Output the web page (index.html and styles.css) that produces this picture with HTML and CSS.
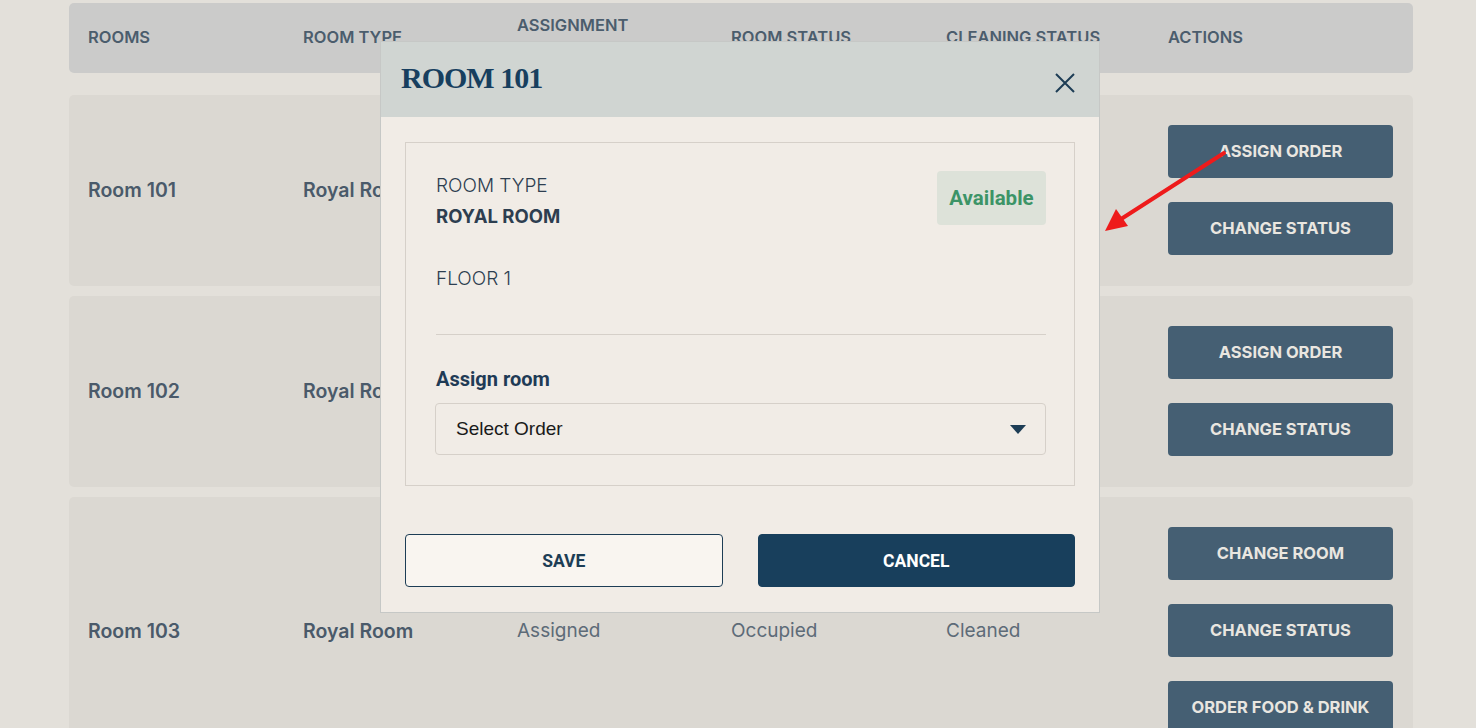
FILE: index.html
```html
<!DOCTYPE html>
<html lang="en">
<head>
    <meta charset="UTF-8">
    <meta name="viewport" content="width=device-width, initial-scale=1.0">
    <title>Rooms</title>
    <link rel="stylesheet" href="styles.css">
</head>
<body>
    <div class="page">
        <div class="rooms-table">
            <div class="thead">
                <div class="th">Rooms</div>
                <div class="th">Room type</div>
                <div class="th">Assignment<br>status</div>
                <div class="th">Room status</div>
                <div class="th">Cleaning status</div>
                <div class="th">Actions</div>
            </div>

            <div class="row">
                <div class="cell strong">Room 101</div>
                <div class="cell strong">Royal Room</div>
                <div class="cell">Unassigned</div>
                <div class="cell">Available</div>
                <div class="cell">Cleaned</div>
                <div class="actions">
                    <button class="action">Assign order</button>
                    <button class="action">Change status</button>
                </div>
            </div>

            <div class="row">
                <div class="cell strong">Room 102</div>
                <div class="cell strong">Royal Room</div>
                <div class="cell">Unassigned</div>
                <div class="cell">Available</div>
                <div class="cell">Cleaned</div>
                <div class="actions">
                    <button class="action">Assign order</button>
                    <button class="action">Change status</button>
                </div>
            </div>

            <div class="row">
                <div class="cell strong">Room 103</div>
                <div class="cell strong">Royal Room</div>
                <div class="cell">Assigned</div>
                <div class="cell">Occupied</div>
                <div class="cell">Cleaned</div>
                <div class="actions">
                    <button class="action">Change room</button>
                    <button class="action">Change status</button>
                    <button class="action">Order food &amp; drink</button>
                </div>
            </div>
        </div>
    </div>

    <div class="modal">
        <div class="modal-header">
            <h2 class="modal-title">ROOM 101</h2>
            <button class="modal-close" aria-label="Close">
                <svg width="20" height="20" viewBox="0 0 20 20">
                    <path d="M1 1 L19 19 M19 1 L1 19" stroke="#1d3d55" stroke-width="2" fill="none"/>
                </svg>
            </button>
        </div>
        <div class="modal-body">
            <div class="room-card">
                <div class="room-top">
                    <div class="room-info">
                        <p class="label">ROOM TYPE</p>
                        <p class="value">ROYAL ROOM</p>
                        <p class="label floor">FLOOR 1</p>
                    </div>
                    <span class="badge">Available</span>
                </div>
                <hr class="divider">
                <p class="field-label">Assign room</p>
                <div class="select">
                    <span>Select Order</span>
                    <svg width="16" height="9" viewBox="0 0 16 9"><path d="M0 0 H16 L8 9 Z" fill="#1d3d55"/></svg>
                </div>
            </div>
            <div class="modal-buttons">
                <button class="btn btn-save">SAVE</button>
                <button class="btn btn-cancel">CANCEL</button>
            </div>
        </div>
    </div>

    <svg class="pointer" width="140" height="95" viewBox="0 0 140 95">
        <line x1="132" y1="8" x2="26" y2="76" stroke="#ee1b1b" stroke-width="4" stroke-linecap="round"/>
        <path d="M13 86 L24 64 L36 81 Z" fill="#ee1b1b"/>
    </svg>
</body>
</html>
```

FILE: styles.css
```css
body {
    margin: 0;
    background: #e3e0da;
    font-family: Inter, "Noto Sans", sans-serif;
    overflow: hidden;
}
.page {
    padding: 3px 0 0 69px;
}
.rooms-table {
    width: 1344px;
}
.thead,
.row {
    display: grid;
    grid-template-columns: 215px 214px 214px 215px 222px 1fr;
    padding: 0 20px 0 19px;
    align-items: center;
    border-radius: 5px;
}
.thead {
    height: 70px;
    background: #cbcbca;
    margin-bottom: 22px;
}
.th {
    font-size: 16.5px;
    font-weight: 600;
    text-transform: uppercase;
    color: #4b5d6d;
    line-height: 24px;
    margin-top: -2px;
}
.row {
    background: #dbd8d2;
    padding-top: 30px;
    padding-bottom: 31px;
    margin-bottom: 10px;
}
.cell {
    font-size: 19px;
    color: #5d6b78;
}
.cell.strong {
    font-size: 19.5px;
    font-weight: 600;
    color: #4a5a6a;
}
.actions {
    display: flex;
    flex-direction: column;
    gap: 24px;
}
.action {
    height: 53px;
    padding-bottom: 3px;
    border: none;
    border-radius: 4px;
    background: #455f73;
    color: #e9e6e0;
    font-family: Inter, sans-serif;
    font-size: 16.5px;
    font-weight: 700;
    text-transform: uppercase;
    cursor: pointer;
}

.modal {
    position: absolute;
    top: 41px;
    left: 380px;
    width: 718px;
    background: #f1ece6;
    border: 1px solid #c6c8c6;
}
.modal-header {
    height: 75px;
    background: #d0d5d2;
    display: flex;
    align-items: center;
    justify-content: space-between;
    padding: 0 24px 0 20px;
}
.modal-title {
    margin: 0 0 4px 0;
    font-family: "Liberation Serif", "DejaVu Serif", serif;
    font-size: 30px;
    font-weight: 700;
    letter-spacing: -1px;
    color: #173f5f;
}
.modal-close {
    background: none;
    border: none;
    padding: 0;
    margin-top: 6px;
    display: flex;
    cursor: pointer;
}
.modal-body {
    padding: 25px 24px 25px 24px;
}
.room-card {
    border: 1px solid #d6d0c9;
    padding: 27px 28px 30px 30px;
}
.room-top {
    display: flex;
    justify-content: space-between;
    align-items: flex-start;
}
.room-info p {
    margin: 0;
    line-height: 31px;
    font-size: 19px;
    color: #2d3e50;
}
.label {
    font-weight: 300;
}
.value {
    font-weight: 700;
    color: #1f3b56;
}
.room-info .value {
    font-size: 18.5px;
}
.label.floor {
    margin-top: 31px;
}
.badge {
    width: 109px;
    height: 54px;
    margin-top: 1px;
    display: flex;
    align-items: center;
    justify-content: center;
    background: #dde2d9;
    border-radius: 4px;
    font-family: Roboto, sans-serif;
    font-size: 20.5px;
    font-weight: 700;
    color: #3c9467;
}
.divider {
    border: none;
    border-top: 1px solid #d6d0c9;
    margin: 40px 0 0 0;
}
.field-label {
    margin: 32px 0 12px 0;
    line-height: 24px;
    font-family: Roboto, sans-serif;
    font-size: 20px;
    font-weight: 700;
    color: #1f3b56;
}
.select {
    height: 50px;
    border: 1px solid #d6d0c9;
    border-radius: 4px;
    margin-left: -1px;
    display: flex;
    align-items: center;
    justify-content: space-between;
    padding: 0 19px 0 20px;
    font-family: "Liberation Sans", Arial, sans-serif;
    font-size: 19px;
    color: #1a1a1a;
}
.modal-buttons {
    display: grid;
    grid-template-columns: 1fr 1fr;
    gap: 35px;
    margin-top: 48px;
}
.btn {
    height: 53px;
    border-radius: 4px;
    font-family: Roboto, sans-serif;
    font-size: 17.5px;
    font-weight: 700;
    cursor: pointer;
}
.btn-save {
    background: #f9f5f0;
    border: 1px solid #1d3d55;
    color: #1d3d55;
}
.btn-cancel {
    background: #183f5c;
    border: 1px solid #183f5c;
    color: #fff;
}

.pointer {
    position: absolute;
    top: 145px;
    left: 1092px;
}
```
